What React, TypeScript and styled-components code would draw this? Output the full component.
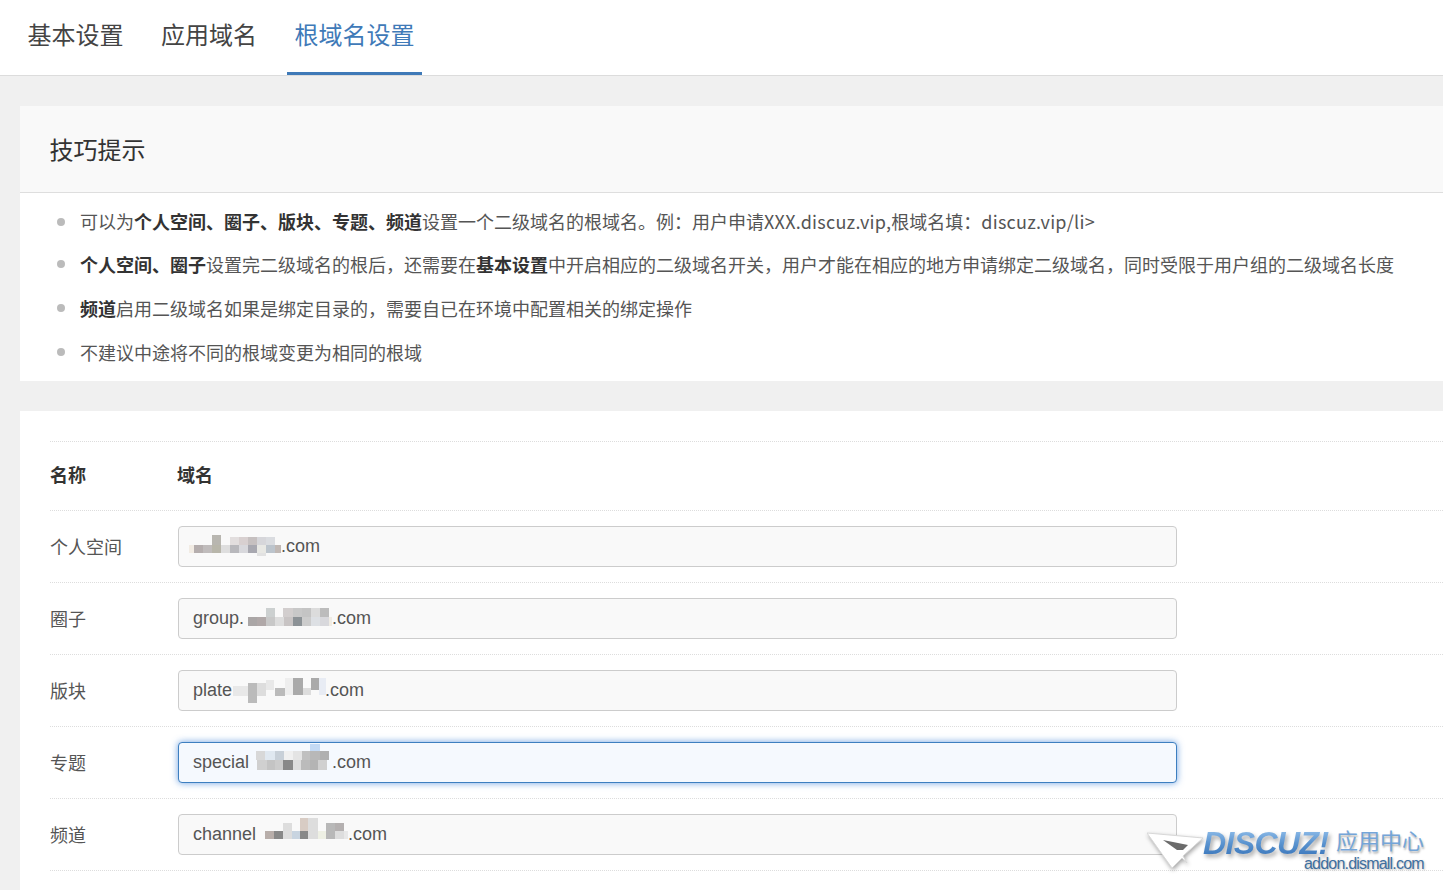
import React from "react";
import styled, { createGlobalStyle } from "styled-components";

const GlobalStyle = createGlobalStyle`
  html, body { margin: 0; padding: 0; height: 890px; overflow: hidden; background: #f0f0f0; }
  body { font-family: "Noto Sans CJK SC", "Liberation Sans", sans-serif; }
  * { box-sizing: border-box; }
`;

const Page = styled.div`
  position: relative;
  height: 890px;
  overflow: hidden;
  background: #f0f0f0;
`;

const TabBar = styled.nav`
  display: flex;
  gap: 22.5px;
  height: 76px;
  padding-left: 20px;
  background: #fff;
  border-bottom: 1px solid #dcdcdc;
`;

const Tab = styled.div<{ $active?: boolean }>`
  height: 75px;
  padding: 0 7.5px 6px;
  display: flex;
  align-items: center;
  font-size: 24px;
  color: ${(p) => (p.$active ? "#3f7ab8" : "#444")};
  border-bottom: 3px solid ${(p) => (p.$active ? "#3f7ab8" : "transparent")};
`;

const Content = styled.main`
  display: flex;
  flex-direction: column;
  gap: 30px;
  padding: 30px 0 0 20px;
`;

const TipsCard = styled.section`
  background: #fff;
`;

const TipsHead = styled.h2`
  margin: 0;
  height: 87px;
  padding: 0 0 2px 29.5px;
  display: flex;
  align-items: center;
  font-size: 24px;
  font-weight: 400;
  color: #333;
  background: #f9f9f9;
  border-bottom: 1px solid #dedede;
`;

const TipsList = styled.ul`
  list-style: none;
  margin: 0;
  padding: 5px 0 7px 60px;
`;

const Tip = styled.li`
  position: relative;
  height: 44px;
  display: flex;
  align-items: center;
  font-size: 18px;
  color: #555;
  white-space: nowrap;

  &:first-child {
    padding-top: 2px;
  }

  &::before {
    content: "";
    position: absolute;
    left: -23px;
    top: 18px;
    width: 8px;
    height: 8px;
    border-radius: 50%;
    background: #bbb;
  }

  &:first-child::before {
    top: 20px;
  }

  b {
    font-weight: 700;
    color: #333;
  }
`;

const Latin = styled.span`
  letter-spacing: 0.25px;
`;

const TableCard = styled.section`
  background: #fff;
  padding: 30px 0 40px 30px;
`;

const HeaderRow = styled.div`
  display: flex;
  align-items: center;
  height: 69px;
  padding-bottom: 2px;
  border-top: 1px dotted #dddddd;
  font-size: 18px;
  font-weight: 700;
  color: #333;
`;

const Row = styled.div`
  display: flex;
  align-items: center;
  height: 72px;
  border-top: 1px dotted #dddddd;
  font-size: 18px;
  color: #555;
`;

const EndRule = styled.div`
  border-top: 1px dotted #dddddd;
`;

const NameCell = styled.div`
  width: 128px;
  flex: none;
  padding-bottom: 2px;
`;

const DomainHead = styled.div`
  margin-left: -1px;
  padding-bottom: 2px;
`;

const Field = styled.div<{ $focus?: boolean }>`
  width: 999px;
  height: 41px;
  display: flex;
  align-items: center;
  padding: 0 14px;
  font-family: "Liberation Sans", Arial, sans-serif;
  font-size: 18px;
  color: #555;
  border-radius: 4px;
  background: ${(p) => (p.$focus ? "#f5f9fe" : "#f9f9f9")};
  border: 1px solid ${(p) => (p.$focus ? "#3d7fc0" : "#cccccc")};
  box-shadow: ${(p) => (p.$focus ? "0 0 7px rgba(60, 130, 215, 0.75)" : "none")};
`;

const Mosaic = styled.svg<{ $ml?: number }>`
  flex: none;
  overflow: visible;
  display: block;
  margin-left: ${(p) => p.$ml ?? 0}px;
`;

const Watermark = styled.div`
  position: absolute;
  left: 1147px;
  top: 826px;
  width: 290px;
  height: 50px;
`;

const Arrow = styled.svg`
  position: absolute;
  left: 0;
  top: 6px;
  filter: drop-shadow(1px 2px 2px rgba(0, 0, 0, 0.35));
`;

const BrandText = styled.span`
  position: absolute;
  left: 56px;
  top: 4px;
  font-family: "Liberation Sans", sans-serif;
  font-style: italic;
  font-weight: 700;
  font-size: 32px;
  line-height: 26px;
  letter-spacing: -0.6px;
  background: linear-gradient(180deg, #8dbbe8 0%, #5b94d0 50%, #3c78bc 100%);
  -webkit-background-clip: text;
  background-clip: text;
  color: transparent;
  filter: drop-shadow(2px 3px 2px rgba(60, 60, 60, 0.45));
`;

const BrandCn = styled.span`
  position: absolute;
  left: 189px;
  top: 0;
  font-size: 22px;
  line-height: 26px;
  color: #74a5d8;
  text-shadow: 1px 2px 2px rgba(60, 60, 60, 0.4);
`;

const BrandUrl = styled.span`
  position: absolute;
  left: 157px;
  top: 30px;
  font-family: "Liberation Sans", sans-serif;
  font-size: 16px;
  line-height: 16px;
  letter-spacing: -0.8px;
  color: #3f6f9f;
  text-shadow: 1px 1px 2px rgba(60, 60, 60, 0.35);
`;

type Cell = [number, number, number, number, string];

const Blur = ({ w, h, cells, ml }: { w: number; h: number; cells: Cell[]; ml?: number }) => (
  <Mosaic $ml={ml} width={w} height={h} viewBox={`0 0 ${w} ${h}`}>
    {cells.map(([x, y, cw, ch, fill], i) => (
      <rect key={i} x={x} y={y} width={cw} height={ch} fill={fill} />
    ))}
  </Mosaic>
);

const personal: Cell[] = [
  [19, 0, 9, 10, "#b8b6b0"], [37, 2, 9, 8, "#e2dede"], [46, 2, 9, 8, "#d8d0d0"], [55, 2, 9, 8, "#c6c0c0"],
  [64, 2, 9, 8, "#d6d6da"], [73, 2, 9, 8, "#dadce0"],
  [-4, 10, 5, 8, "#f2ece4"], [1, 10, 9, 8, "#b5aeae"], [10, 10, 9, 8, "#c0bcbc"], [19, 10, 9, 8, "#b8b6aa"],
  [28, 10, 9, 8, "#dedede"], [37, 10, 9, 8, "#b8b8bc"], [46, 10, 9, 8, "#d8d8dc"], [55, 10, 9, 8, "#a8a8b0"],
  [64, 10, 9, 8, "#e8e8e4"], [73, 10, 9, 8, "#bcc4cc"], [82, 10, 6, 8, "#c0b8b4"], [64, 18, 9, 3, "#e2e2e2"],
];
const group: Cell[] = [
  [18, 1, 9, 9, "#ccd0d0"], [35, 1, 10, 9, "#d2cece"], [45, 1, 9, 9, "#c8c8c8"], [54, 1, 9, 9, "#c4c4c4"],
  [63, 1, 9, 9, "#dcdcdc"], [72, 1, 9, 9, "#bcbcbc"],
  [0, 10, 9, 9, "#aaa6a6"], [9, 10, 9, 9, "#b0a8a8"], [18, 10, 9, 9, "#c8c8c8"], [27, 10, 9, 9, "#dddddd"],
  [36, 10, 9, 9, "#c8c4c4"], [45, 10, 9, 9, "#8c9296"], [54, 10, 9, 9, "#cccccc"], [63, 10, 9, 9, "#dde0e4"],
  [72, 10, 9, 9, "#d8d8dc"], [81, 10, 3, 9, "#f0ece4"],
];
const plate: Cell[] = [
  [0, 8, 15, 10, "#e8e8e8"], [15, 5, 9, 20, "#bbbbbb"], [24, 5, 9, 13, "#dddddd"], [33, 2, 8, 10, "#e8e8e8"],
  [42, 10, 10, 8, "#bbbbbb"], [52, 0, 8, 17, "#eeeeee"], [60, 0, 10, 17, "#aaaaaa"], [70, 10, 8, 7, "#dddddd"],
  [78, 0, 8, 12, "#aaaaaa"], [86, 0, 7, 17, "#e8ecf4"],
];
const special: Cell[] = [
  [0, 0, 9, 9, "#d8d8d8"], [9, 0, 10, 9, "#e0e8f0"], [19, 0, 9, 9, "#c8d0d8"], [28, 0, 9, 9, "#f0f0f0"],
  [37, 0, 9, 9, "#e4e4e4"], [46, 0, 8, 9, "#c0c0c0"], [54, 0, 10, 9, "#b8b8b8"], [64, 0, 9, 9, "#b0b0b0"],
  [1, 9, 10, 10, "#d0d0d0"], [11, 9, 8, 10, "#c4c4c4"], [19, 9, 8, 10, "#cccccc"], [27, 9, 10, 10, "#888888"],
  [37, 9, 8, 10, "#dddddd"], [45, 9, 9, 10, "#bbbbbb"], [54, 9, 8, 10, "#b4b4b4"], [62, 9, 9, 10, "#d0d0d0"],
  [54, -7, 10, 7, "#c4daf4"],
];
const channel: Cell[] = [
  [0, 9, 9, 8, "#b8aeaa"], [9, 9, 9, 8, "#888888"], [18, 1, 9, 16, "#dddddd"], [27, 9, 8, 8, "#c8d4e0"],
  [35, -4, 8, 13, "#d8ccc4"], [35, 9, 8, 8, "#888888"], [43, -4, 10, 21, "#dddddd"], [53, 9, 8, 8, "#eef0e4"],
  [61, 1, 9, 16, "#b8b8b8"], [70, 1, 9, 8, "#b4b0b0"], [70, 9, 9, 8, "#dddddd"], [79, 9, 4, 8, "#e8e8e8"],
];

const rows = [
  { name: "个人空间", before: "", cells: personal, w: 88, h: 23 },
  { name: "圈子", before: "group.", cells: group, w: 84, h: 23, ml: 4 },
  { name: "版块", before: "plate", cells: plate, w: 92, h: 25, ml: 1 },
  { name: "专题", before: "special", cells: special, w: 76, h: 24, ml: 7, focus: true },
  { name: "频道", before: "channel", cells: channel, w: 83, h: 25, ml: 9 },
];

export default function App() {
  return (
    <Page>
      <GlobalStyle />
      <TabBar>
        <Tab>基本设置</Tab>
        <Tab>应用域名</Tab>
        <Tab $active>根域名设置</Tab>
      </TabBar>
      <Content>
        <TipsCard>
          <TipsHead>技巧提示</TipsHead>
          <TipsList>
            <Tip>
              <span>
                可以为<b>个人空间、圈子、版块、专题、频道</b>设置一个二级域名的根域名。例：用户申请<Latin>XXX.discuz.vip,</Latin>根域名填：<Latin>discuz.vip/li&gt;</Latin>
              </span>
            </Tip>
            <Tip>
              <span>
                <b>个人空间、圈子</b>设置完二级域名的根后，还需要在<b>基本设置</b>中开启相应的二级域名开关，用户才能在相应的地方申请绑定二级域名，同时受限于用户组的二级域名长度
              </span>
            </Tip>
            <Tip>
              <span>
                <b>频道</b>启用二级域名如果是绑定目录的，需要自已在环境中配置相关的绑定操作
              </span>
            </Tip>
            <Tip>
              <span>不建议中途将不同的根域变更为相同的根域</span>
            </Tip>
          </TipsList>
        </TipsCard>
        <TableCard>
          <HeaderRow>
            <NameCell>名称</NameCell>
            <DomainHead>域名</DomainHead>
          </HeaderRow>
          {rows.map((r) => (
            <Row key={r.name}>
              <NameCell>{r.name}</NameCell>
              <Field $focus={r.focus}>
                {r.before}
                <Blur w={r.w} h={r.h} cells={r.cells} ml={r.ml} />
                .com
              </Field>
            </Row>
          ))}
          <EndRule />
        </TableCard>
      </Content>
      <Watermark>
        <Arrow width="58" height="40" viewBox="0 0 58 40">
          <path d="M0 1 L56 6 L36 24 L40 31 L35 26 L25 36 Z" fill="#fff" stroke="#d8d8d8" strokeWidth="1" />
          <path d="M16 8 L41 13 L36 18 L30 18 Z" fill="#6b6b6b" />
        </Arrow>
        <BrandText>DISCUZ!</BrandText>
        <BrandCn>应用中心</BrandCn>
        <BrandUrl>addon.dismall.com</BrandUrl>
      </Watermark>
    </Page>
  );
}
